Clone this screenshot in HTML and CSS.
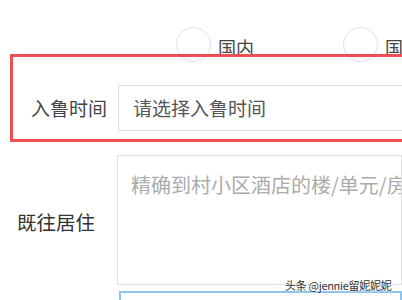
FILE: index.html
```html
<!DOCTYPE html>
<html lang="zh">
<head>
<meta charset="utf-8">
<link rel="stylesheet" href="styles.css">
</head>
<body>
<div class="page">
  <div class="radios">
    <div class="radio"><span class="circle"></span><span class="rlabel">国内</span></div>
    <div class="radio"><span class="circle"></span><span class="rlabel">国外</span></div>
  </div>
  <div class="highlight">
    <div class="row">
      <div class="label">入鲁时间</div>
      <div class="input">请选择入鲁时间</div>
    </div>
  </div>
  <div class="row2">
    <div class="label2">既往居住</div>
    <div class="textarea">精确到村小区酒店的楼/单元/房间号</div>
  </div>
  <div class="row3">
    <div class="input2"></div>
  </div>
  <div class="watermark">头条 @jennie留妮妮妮</div>
</div>
</body>
</html>
```
FILE: styles.css
```css
html, body {
  margin: 0;
  padding: 0;
  background: #fff;
  overflow: hidden;
}
.page {
  position: relative;
  width: 402px;
  height: 300px;
  overflow: hidden;
  font-family: "Noto Sans CJK SC", "Noto Sans", sans-serif;
}
.radios {
  display: flex;
  padding-top: 27px;
  padding-left: 176px;
  height: 36px;
}
.radio {
  display: flex;
  align-items: flex-start;
  width: 167px;
  flex: none;
}
.circle {
  width: 33px;
  height: 33px;
  border: 1.5px solid #e2e2e2;
  border-radius: 50%;
  flex: none;
}
.rlabel {
  margin-left: 7px;
  font-size: 18px;
  color: #444;
  line-height: 18px;
  margin-top: 11px;
}
.highlight {
  position: relative;
  margin-top: -9px;
  margin-left: 10px;
  width: 430px;
  height: 82px;
  border: 3px solid #ec4e52;
  background: transparent;
}
.row {
  display: flex;
  align-items: center;
  padding-top: 28px;
  padding-left: 18px;
}
.label {
  font-size: 19px;
  color: #444;
  width: 87px;
  flex: none;
  line-height: 46px;
}
.input {
  height: 44px;
  border: 1px solid #dcdcdc;
  flex: 1;
  font-size: 19px;
  color: #555;
  line-height: 44px;
  padding-left: 14px;
}
.row2 {
  display: flex;
  align-items: center;
  margin-top: 13px;
  padding-left: 17px;
}
.label2 {
  font-size: 19.5px;
  color: #333;
  width: 100px;
  flex: none;
  margin-top: 2px;
}
.textarea {
  width: 300px;
  height: 130px;
  border: 1.5px solid #dedede;
  font-size: 20px;
  color: #ababab;
  padding-left: 13px;
  padding-top: 16px;
  box-sizing: border-box;
  white-space: nowrap;
  overflow: hidden;
  line-height: 26px;
}
.row3 {
  padding-left: 119px;
  margin-top: 6px;
}
.input2 {
  height: 30px;
  border: 2px solid #8cc4f0;
}
.watermark {
  position: absolute;
  left: 285px;
  top: 278px;
  font-size: 11px;
  line-height: 14px;
  color: #333;
  letter-spacing: -0.3px;
  text-shadow: 0 0 2px #fff, 0 0 2px #fff;
  white-space: nowrap;
}
```
